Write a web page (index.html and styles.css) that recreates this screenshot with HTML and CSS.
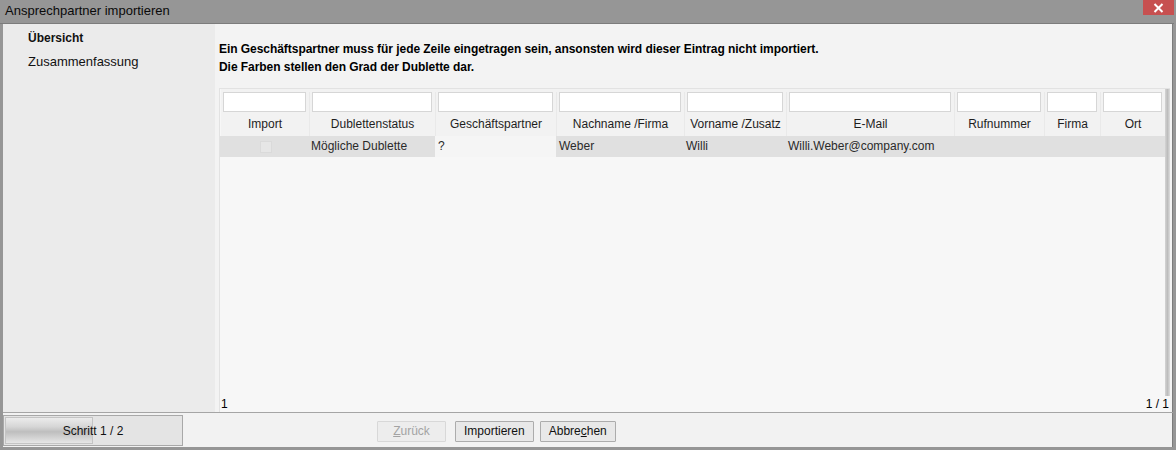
FILE: index.html
```html
<!DOCTYPE html>
<html lang="de">
<head>
<meta charset="utf-8">
<title>Ansprechpartner importieren</title>
<link rel="stylesheet" href="styles.css">
</head>
<body>
<div class="window">
  <div class="titlebar">
    <span class="title">Ansprechpartner importieren</span>
    <button class="close" aria-label="Schließen">
      <svg width="11" height="10" viewBox="0 0 11 10"><path d="M1.5 1 L9.5 9 M9.5 1 L1.5 9" stroke="#fff" stroke-width="2" fill="none"/></svg>
    </button>
  </div>
  <div class="frame">
    <div class="content">
      <nav class="nav">
        <div class="nav-item active">Übersicht</div>
        <div class="nav-item">Zusammenfassung</div>
      </nav>
      <main class="main">
        <p class="info">Ein Geschäftspartner muss für jede Zeile eingetragen sein, ansonsten wird dieser Eintrag nicht importiert.<br>Die Farben stellen den Grad der Dublette dar.</p>
        <div class="table">
          <div class="table-area">
            <div class="grid">
              <div class="row filters">
                <div class="cell c1"><span class="filter"></span></div>
                <div class="cell c2"><span class="filter"></span></div>
                <div class="cell c3"><span class="filter"></span></div>
                <div class="cell c4"><span class="filter"></span></div>
                <div class="cell c5"><span class="filter"></span></div>
                <div class="cell c6"><span class="filter"></span></div>
                <div class="cell c7"><span class="filter"></span></div>
                <div class="cell c8"><span class="filter"></span></div>
                <div class="cell c9"><span class="filter"></span></div>
              </div>
              <div class="row heads">
                <div class="cell c1">Import</div>
                <div class="cell c2">Dublettenstatus</div>
                <div class="cell c3">Geschäftspartner</div>
                <div class="cell c4">Nachname /Firma</div>
                <div class="cell c5">Vorname /Zusatz</div>
                <div class="cell c6">E-Mail</div>
                <div class="cell c7">Rufnummer</div>
                <div class="cell c8">Firma</div>
                <div class="cell c9">Ort</div>
              </div>
              <div class="row data">
                <div class="cell c1"><span class="check"></span></div>
                <div class="cell c2">Mögliche Dublette</div>
                <div class="cell c3 edit">?</div>
                <div class="cell c4">Weber</div>
                <div class="cell c5">Willi</div>
                <div class="cell c6">Willi.Weber@company.com</div>
                <div class="cell c7"></div>
                <div class="cell c8"></div>
                <div class="cell c9"></div>
              </div>
            </div>
            <div class="vscroll"></div>
          </div>
          <div class="status">
            <span>1</span>
            <span>1 / 1</span>
          </div>
        </div>
      </main>
    </div>
    <footer class="footer">
      <div class="progress">
        <div class="progress-fill"></div>
        <span class="progress-label">Schritt 1 / 2</span>
      </div>
      <div class="buttons">
        <button class="btn disabled"><u>Z</u>urück</button>
        <button class="btn">Importieren</button>
        <button class="btn">Abbre<u>c</u>hen</button>
      </div>
    </footer>
  </div>
</div>
</body>
</html>
```
FILE: styles.css
```css
* { box-sizing: border-box; }
html, body { margin: 0; padding: 0; }
body {
  background: #969696;
  font-family: "Liberation Sans", Arial, sans-serif;
  font-size: 12px;
  color: #1a1a1a;
}
.window {
  width: 1176px;
  height: 450px;
  display: flex;
  flex-direction: column;
  background: #969696;
}
.titlebar {
  height: 24px;
  flex: none;
  display: flex;
  justify-content: space-between;
  align-items: flex-start;
  border-bottom: 1px solid #7c7c7c;
  margin: 0 2px 0 0;
}
.title {
  padding: 3px 0 0 5px;
  font-size: 13px;
  color: #0a0a0a;
  line-height: 15px;
}
.close {
  width: 31px;
  height: 15px;
  margin: 0;
  padding: 0;
  border: 0;
  background: #c75050;
  display: flex;
  align-items: center;
  justify-content: center;
}
.frame {
  flex: 1;
  display: flex;
  flex-direction: column;
  margin: 0 3px 3px 3px;
  background: #f2f2f2;
}
.content {
  height: 389px;
  flex: none;
  display: flex;
  border-bottom: 1px solid #a5a5a5;
}
.nav {
  flex: none;
  width: 212px;
  background: #ebebeb;
  padding: 7px 0 0 25px;
}
.nav-item {
  height: 24px;
  line-height: 14px;
  font-size: 13px;
  color: #111;
}
.nav-item.active {
  font-weight: bold;
  font-size: 12px;
}
.main {
  flex: 1;
  min-width: 0;
  background: #f3f3f3;
  padding: 16px 2px 0 4px;
  display: flex;
  flex-direction: column;
  border-right: 1px solid #7c7c7c;
}
.info {
  margin: 0;
  font-weight: bold;
  line-height: 18px;
  letter-spacing: -0.05px;
  color: #000;
}
.table {
  flex: 1;
  margin-top: 12px;
  display: flex;
  flex-direction: column;
  background: #f7f7f7;
  border-left: 1px solid #e2e2e2;
  border-top: 1px solid #e2e2e2;
}
.table-area {
  flex: 1;
  display: flex;
}
.grid {
  flex: none;
  width: 945px;
  padding-left: 1px;
}
.vscroll {
  flex: none;
  width: 5px;
  background: linear-gradient(to right, #d4d4d4, #bdbdbd 50%, #dcdcdc);
}
.row {
  display: flex;
}
.cell {
  flex: none;
  white-space: nowrap;
  overflow: hidden;
}
.c1 { width: 88px; }
.c2 { width: 126px; }
.c3 { width: 121px; }
.c4 { width: 128px; }
.c5 { width: 102px; }
.c6 { width: 168px; }
.c7 { width: 90px; }
.c8 { width: 56px; }
.c9 { width: 65px; }
.filters {
  background: #f2f2f2;
  padding-top: 3px;
  height: 23px;
}
.filters .cell {
  padding: 0 3px 0 2px;
  border-left: 1px solid #e9e9e9;
}
.filters .cell.c1 { border-left: 0; }
.filter {
  display: block;
  height: 20px;
  background: #fff;
  border: 1px solid #d6d6d6;
}
.heads {
  background: #f2f2f2;
  height: 24px;
}
.heads .cell {
  text-align: center;
  line-height: 24px;
  color: #1e1e1e;
  border-left: 1px solid #e9e9e9;
}
.heads .cell.c1 { border-left: 0; }
.data {
  background: #e0e0e0;
  height: 21px;
  margin-left: -1px;
}
.data .cell {
  line-height: 21px;
  padding-left: 2px;
  color: #2a2a2a;
}
.data .c1 {
  width: 89px;
  display: flex;
  align-items: center;
  justify-content: center;
}
.data .c3 { padding-left: 3px; }
.data .c4 { padding-left: 3px; }
.data .edit { background: #f5f5f5; }
.check {
  width: 12px;
  height: 12px;
  background: #e6e6e6;
  border: 1px solid #dadada;
}
.status {
  height: 16px;
  display: flex;
  justify-content: space-between;
  padding: 1px 1px 0 1px;
  line-height: 14px;
  color: #000;
}
.footer {
  flex: 1;
  display: flex;
  align-items: center;
  background: #f2f2f2;
  border-right: 1px solid #7c7c7c;
}
.progress {
  width: 180px;
  height: 31px;
  margin-top: 1px;
  border: 1px solid #a8a8a8;
  background: #e4e4e4;
  padding: 1px;
  display: flex;
  align-items: stretch;
  position: relative;
}
.progress-fill {
  width: 88px;
  border: 1px solid #c4c4c4;
  background: linear-gradient(to bottom, #ececec, #d6d6d6 35%, #bebebe 55%, #d4d4d4 80%, #e6e6e6);
}
.progress-label {
  position: absolute;
  left: 0;
  right: 0;
  top: 0;
  bottom: 0;
  display: flex;
  align-items: center;
  justify-content: center;
  color: #111;
}
.buttons {
  display: flex;
  gap: 6px;
  margin-left: 194px;
  margin-top: 2px;
}
.btn {
  height: 21px;
  padding: 0 8px;
  font-family: "Liberation Sans", Arial, sans-serif;
  font-size: 12px;
  color: #111;
  background: #e8e8e8;
  border: 1px solid #acacac;
  border-radius: 1px;
}
.btn.disabled {
  color: #a3a3a3;
  background: #ededed;
  border-color: #d8d8d8;
  width: 69px;
  margin-right: 3px;
}
```
